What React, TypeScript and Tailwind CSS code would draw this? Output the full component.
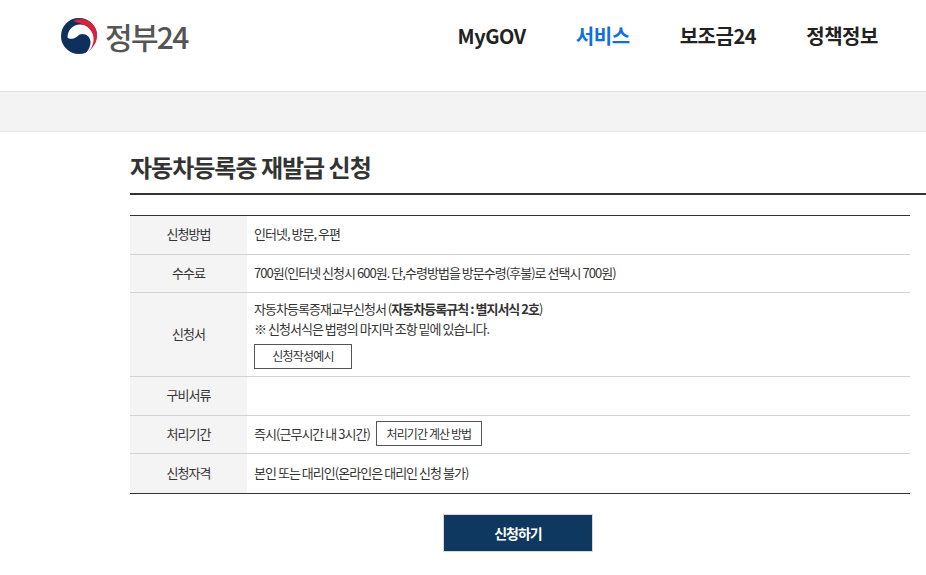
const kr = "font-['Noto_Sans_CJK_KR','Noto_Sans',sans-serif]";

function Logo() {
  return (
    <svg width="38" height="38" viewBox="0 0 38 38" className="shrink-0">
      <circle cx="19" cy="19" r="18" fill="#0f2f5c" />
      <path d="M7.500 20.500C7.500 13 13 7.500 20 7.500c7 0 13 4.500 18 11.500v19H24c4-4 6.500-8 6.500-13 0-5-4-8-8-8-4 0-5.500 3.500-9 4.500-2 .5-5 .5-6-1Z" fill="#fff" />
      <path d="M13 4C17 1.500 24 1 30 5c5 3.500 7.500 9 7 15-.3 5-3.500 10.500-8 14 3.500-4.500 5-9 4.500-13.500C33 15 29.500 11 25 8.500 21 6.500 17 5 13 4Z" fill="#d8213b" />
    </svg>
  );
}

function Row({ label, children, h, last }: { label: string; children?: React.ReactNode; h: string; last?: boolean }) {
  return (
    <div className={`flex ${h} ${last ? "" : "border-b border-[#d2d2d2]"}`}>
      <div className="flex w-[117px] shrink-0 items-center justify-center bg-[#f4f4f4] pb-[2px] text-[#333]">{label}</div>
      <div className="flex flex-1 items-center pb-[2px] pl-[7px] text-[#333]">{children}</div>
    </div>
  );
}

export default function App() {
  return (
    <div className={`h-[575px] w-[926px] overflow-hidden bg-white ${kr} text-[13px] tracking-[-0.97px]`}>
      {/* header */}
      <header className="flex h-[92px] border-b border-[#e4e4e4] pl-[60px] pr-[48px] pt-[17px]">
        <div className="flex h-[38px] items-center gap-[7px]">
          <Logo />
          <span className="text-[30px] font-medium leading-none tracking-[-1.7px] text-[#555]">정부24</span>
        </div>
        <nav className="ml-auto flex h-[38px] items-center gap-[50px] text-[20px] font-bold tracking-[-0.45px] text-[#222]">
          <span>MyGOV</span>
          <span className="text-[#0b6fe8]">서비스</span>
          <span>보조금24</span>
          <span>정책정보</span>
        </nav>
      </header>
      <div className="h-[40px] border-b border-[#e8e8e8] bg-[#f4f3f4]" />

      {/* content */}
      <main className="pl-[130px]">
        <h1 className="flex h-[63px] items-center border-b-2 border-[#333] pt-[9px] text-[24px] font-bold tracking-[-1px] text-[#333]">
          자동차등록증 재발급 신청
        </h1>
        <div className="mt-[20px] w-[780px] border-y border-y-[#333]">
          <Row label="신청방법" h="h-[39px]">인터넷, 방문, 우편</Row>
          <Row label="수수료" h="h-[38px]">700원(인터넷 신청시 600원. 단,수령방법을 방문수령(후불)로 선택시 700원)</Row>
          <Row label="신청서" h="h-[84px]">
            <div className="flex flex-col items-start">
              <p className="leading-[20px]">
                자동차등록증재교부신청서 (<b>자동차등록규칙 : 별지서식 2호</b>)
              </p>
              <p className="leading-[20px]">※ 신청서식은 법령의 마지막 조항 밑에 있습니다.</p>
              <button className="mt-[5px] flex h-[25px] w-[98px] items-center justify-center border border-[#555] text-[12px] tracking-[-0.8px]">신청작성예시</button>
            </div>
          </Row>
          <Row label="구비서류" h="h-[39px]" />
          <Row label="처리기간" h="h-[38px]">
            <span>즉시(근무시간 내 3시간)</span>
            <button className="ml-[6px] flex h-[25px] w-[106px] items-center justify-center border border-[#555] text-[12px] tracking-[-0.9px]">처리기간 계산 방법</button>
          </Row>
          <Row label="신청자격" h="h-[39px]" last>본인 또는 대리인(온라인은 대리인 신청 불가)</Row>
        </div>
        <div className="mt-[20px] flex w-[780px] justify-center">
          <button className="ml-[-4px] flex h-[38px] w-[150px] items-center justify-center border border-[#d5d9de] bg-[#0e385f] text-[14px] font-bold tracking-[-1px] text-white">신청하기</button>
        </div>
      </main>
    </div>
  );
}
